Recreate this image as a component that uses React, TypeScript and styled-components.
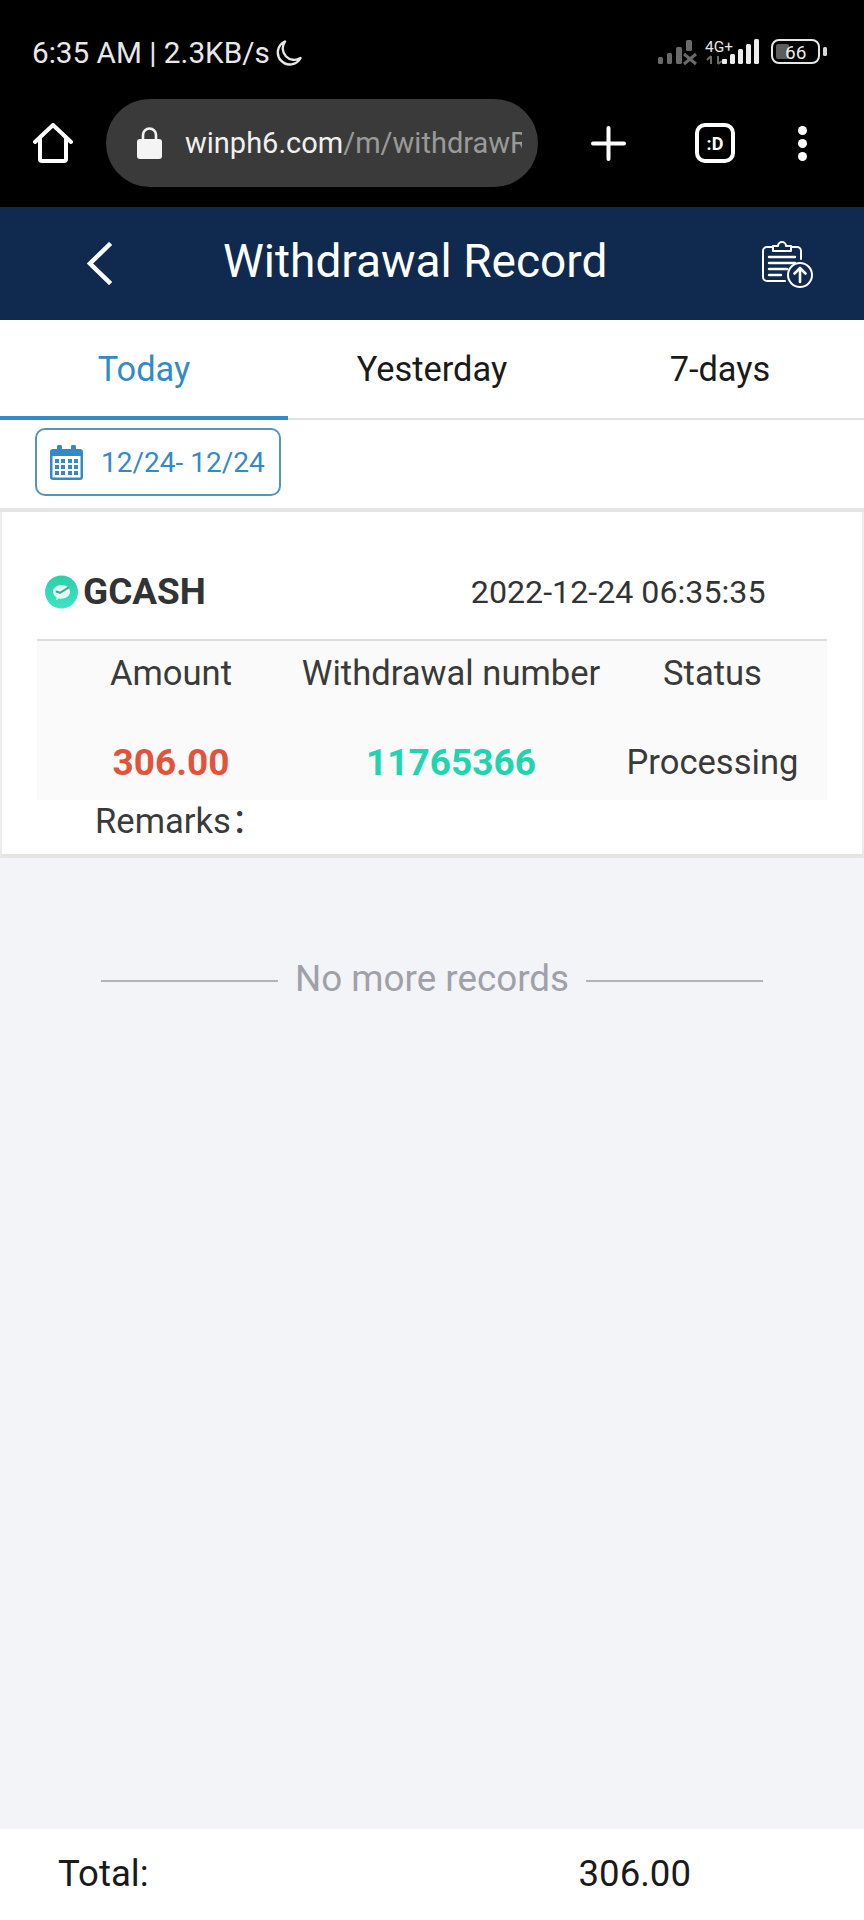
import styled, { createGlobalStyle } from "styled-components";

const GlobalStyle = createGlobalStyle`
    html, body {
        margin: 0;
        padding: 0;
        background: #f3f4f8;
    }
    * {
        box-sizing: border-box;
    }
`;

const Page = styled.div`
    display: flex;
    flex-direction: column;
    width: 864px;
    height: 1920px;
    overflow: hidden;
    font-family: Roboto, "Liberation Sans", sans-serif;
    background: #f3f4f8;
`;

const PhoneChrome = styled.div`
    height: 207px;
    flex-shrink: 0;
    background: #000;
    color: #fff;
`;

const StatusBar = styled.div`
    display: flex;
    align-items: flex-start;
    justify-content: space-between;
    height: 99px;
    padding: 35px 34px 0 32px;
`;

const StatusLeft = styled.div`
    display: flex;
    align-items: center;
    gap: 4px;
    color: #e8e8e8;
    font-size: 29.7px;
    line-height: 36px;
`;

const StatusIcons = styled.svg`
    display: block;
    margin-top: 3px;
    overflow: visible;
`;

const BrowserBar = styled.div`
    display: flex;
    align-items: center;
    height: 88px;
    padding-left: 33px;
`;

const HomeIcon = styled.svg`
    flex-shrink: 0;
    margin-right: 33px;
`;

const UrlPill = styled.div`
    display: flex;
    align-items: center;
    width: 432px;
    height: 88px;
    padding-left: 31px;
    flex-shrink: 0;
    border-radius: 44px;
    background: #3a3a3a;
`;

const LockIcon = styled.svg`
    flex-shrink: 0;
    margin-right: 23px;
`;

const UrlText = styled.div`
    width: 337px;
    line-height: 40px;
    overflow: hidden;
    white-space: nowrap;
    font-size: 29px;
    color: #9a9a9a;
    span {
        color: #f0f0f0;
    }
`;

const PlusIcon = styled.svg`
    flex-shrink: 0;
    margin-left: 53px;
`;

const TabCount = styled.div`
    display: flex;
    align-items: center;
    justify-content: center;
    width: 40px;
    height: 40px;
    margin-left: 69px;
    border: 4px solid #fff;
    border-radius: 10px;
    font-size: 18px;
    font-weight: 700;
`;

const MenuDots = styled.div`
    display: flex;
    flex-direction: column;
    gap: 4px;
    margin-left: 63px;
    i {
        display: block;
        width: 9px;
        height: 9px;
        border-radius: 50%;
        background: #fff;
    }
`;

const Header = styled.header`
    display: flex;
    align-items: center;
    height: 113px;
    flex-shrink: 0;
    padding: 0 50px 0 87px;
    background: #0f2a4e;
    color: #fff;
`;

const BackIcon = styled.svg`
    flex-shrink: 0;
`;

const Title = styled.h1`
    margin: 0 0 6px 111px;
    font-size: 46px;
    font-weight: 400;
    line-height: 1;
    white-space: nowrap;
`;

const RecordIcon = styled.svg`
    flex-shrink: 0;
    margin-left: auto;
`;

const Tabs = styled.nav`
    display: grid;
    grid-template-columns: repeat(3, 288px);
    height: 100px;
    flex-shrink: 0;
    background: #fff;
    border-bottom: 2px solid #e2e2e2;
`;

const Tab = styled.div<{ $active?: boolean }>`
    display: flex;
    align-items: center;
    justify-content: center;
    height: 100px;
    padding-top: 2px;
    padding-bottom: ${(p) => (p.$active ? "0" : "4px")};
    font-size: 34.4px;
    color: ${(p) => (p.$active ? "#348ac7" : "#1a1a1a")};
    border-bottom: ${(p) => (p.$active ? "4px solid #348ac7" : "none")};
`;

const FilterRow = styled.div`
    display: flex;
    height: 92px;
    flex-shrink: 0;
    padding: 8px 0 0 35px;
    background: #fff;
    border-bottom: 4px solid #e5e5e5;
`;

const DateButton = styled.div`
    display: flex;
    align-items: center;
    width: 246px;
    height: 68px;
    padding-left: 13px;
    border: 2px solid #5596b8;
    border-radius: 10px;
    color: #348ac7;
    font-size: 28px;
`;

const CalendarIcon = styled.svg`
    flex-shrink: 0;
    margin-right: 18px;
`;

const Card = styled.section`
    height: 346px;
    flex-shrink: 0;
    padding: 0 35px;
    background: #fff;
    border: 2px solid #ececec;
    border-top: none;
    border-bottom: 4px solid #e5e5e5;
`;

const CardHead = styled.div`
    display: flex;
    align-items: center;
    height: 129px;
    padding: 32px 0 0 8px;
    border-bottom: 2px solid #dcdcdc;
`;

const Logo = styled.svg`
    flex-shrink: 0;
    margin-right: 5px;
`;

const Channel = styled.div`
    font-size: 36.9px;
    font-weight: 700;
    color: #333;
`;

const Stamp = styled.div`
    margin-left: 265px;
    font-size: 32.2px;
    color: #333;
    white-space: nowrap;
`;

const Table = styled.div`
    display: grid;
    grid-template-columns: 268px 292px 231px;
    grid-auto-rows: 80px;
    height: 159px;
    background: #fafafa;
`;

const Cell = styled.div<{ $color?: string; $bold?: boolean }>`
    display: flex;
    align-items: center;
    justify-content: center;
    padding-bottom: 16px;
    white-space: nowrap;
    color: ${(p) => p.$color ?? "#3a3a3a"};
    font-weight: ${(p) => (p.$bold ? 700 : 400)};
    font-size: ${(p) => (p.$bold ? "37px" : "34.6px")};
`;

const ValueCell = styled(Cell)`
    padding-bottom: 0;
    padding-top: 2px;
`;

const Remarks = styled.div`
    padding-left: 58px;
    font-size: 34.6px;
    line-height: 36px;
    color: #3a3a3a;
`;

const Colon = styled.span`
    font-family: "Noto Sans CJK SC", sans-serif;
`;

const Records = styled.div`
    flex: 1;
    padding-top: 99px;
`;

const NoMore = styled.div`
    display: flex;
    align-items: center;
    justify-content: center;
    gap: 17px;
    font-size: 36.8px;
    line-height: 44px;
    color: #a0a0a8;
    &::before,
    &::after {
        content: "";
        width: 177px;
        height: 2px;
        margin-top: 4px;
        background: #b4b4b8;
    }
`;

const Footer = styled.footer`
    display: flex;
    align-items: center;
    height: 91px;
    flex-shrink: 0;
    padding: 0 0 3px 58px;
    background: #fff;
    font-size: 36.6px;
    color: #1a1a1a;
`;

const TotalValue = styled.span`
    margin-left: 430px;
`;

const muted = "#6a6a6a";

function NetworkIcons() {
    return (
        <StatusIcons width="172" height="30" viewBox="0 0 172 30">
            <g fill={muted}>
                <rect x="0" y="19" width="5" height="7" rx="1.5" />
                <rect x="9" y="15" width="5" height="11" rx="1.5" />
                <rect x="18" y="9" width="6" height="17" rx="1.5" />
                <rect x="28" y="2" width="6" height="11" rx="1.5" />
            </g>
            <path d="M26 16l12 10M38 16L26 26" stroke={muted} strokeWidth="3" fill="none" />
            <text x="47" y="14" fontSize="15.5" fill="#e6e6e6" fontFamily="Roboto, sans-serif">4G+</text>
            <path d="M53 18v8M49 22l4-4M60 18v8M64 23l-4 3" stroke={muted} strokeWidth="2" fill="none" />
            <g fill="#ededed">
                <rect x="64" y="21" width="5" height="5" rx="1" />
                <rect x="72" y="16" width="5" height="10" rx="1.5" />
                <rect x="80" y="11" width="5" height="15" rx="1.5" />
                <rect x="88" y="6" width="5" height="20" rx="1.5" />
                <rect x="96" y="1" width="5" height="25" rx="1.5" />
            </g>
            <rect x="114" y="2" width="47" height="23" rx="7" fill="none" stroke="#e6e6e6" strokeWidth="2" />
            <rect x="118" y="6" width="13" height="15" rx="2" fill="#5c5c5c" />
            <rect x="165" y="9" width="4" height="9" rx="1.5" fill="#d8d8d8" />
            <text x="127" y="20.5" fontSize="19" fill="#e8e8e8" fontFamily="Roboto, sans-serif">66</text>
        </StatusIcons>
    );
}

export default function App() {
    return (
        <Page>
            <GlobalStyle />
            <PhoneChrome>
                <StatusBar>
                    <StatusLeft>
                        6:35 AM | 2.3KB/s
                        <svg width="28" height="28" viewBox="0 0 28 28" fill="none" stroke="#e8e8e8" strokeWidth="2.4" strokeLinejoin="round">
                            <path d="M11 2.500A12 12 0 1 0 26.500 19 11.500 11.500 0 0 1 11 2.500z" />
                        </svg>
                    </StatusLeft>
                    <NetworkIcons />
                </StatusBar>
                <BrowserBar>
                    <HomeIcon width="40" height="40" viewBox="0 0 40 40" fill="none" stroke="#fff" strokeWidth="4" strokeLinejoin="round" strokeLinecap="round">
                        <path d="M2 19L20 2l18 17M7 16v20a2 2 0 0 0 2 2h22a2 2 0 0 0 2-2V16" />
                    </HomeIcon>
                    <UrlPill>
                        <LockIcon width="25" height="32" viewBox="0 0 25 32">
                            <path d="M6 13V8a6.500 6.500 0 0 1 13 0v5" fill="none" stroke="#f4f4f4" strokeWidth="2.600" />
                            <rect x="0" y="12" width="25" height="20" rx="3" fill="#f4f4f4" />
                        </LockIcon>
                        <UrlText>
                            <span>winph6.com</span>/m/withdrawRecord
                        </UrlText>
                    </UrlPill>
                    <PlusIcon width="35" height="35" viewBox="0 0 35 35" stroke="#fff" strokeWidth="4" strokeLinecap="round">
                        <path d="M17.500 2v31M2 17.500h31" />
                    </PlusIcon>
                    <TabCount>:D</TabCount>
                    <MenuDots>
                        <i />
                        <i />
                        <i />
                    </MenuDots>
                </BrowserBar>
            </PhoneChrome>
            <Header>
                <BackIcon width="25" height="43" viewBox="0 0 25 43" fill="none" stroke="#fff" strokeWidth="4.500" strokeLinecap="square">
                    <path d="M22 3L3 21.500 22 40" />
                </BackIcon>
                <Title>Withdrawal Record</Title>
                <RecordIcon width="53" height="50" viewBox="0 0 53 50" fill="none" stroke="#fff" strokeWidth="2" strokeLinecap="round" strokeLinejoin="round">
                    <path d="M12 8H6a4 4 0 0 0-4 4v26a4 4 0 0 0 4 4h18M30 8h6a4 4 0 0 1 4 4v8" />
                    <path d="M12 12V7h5a4 4 0 0 1 8 0h5v5z" />
                    <path d="M8 18h26M8 24h26M8 30h18M8 36h12" strokeWidth="2.400" />
                    <circle cx="39" cy="36" r="12" fill="#0f2a4e" />
                    <path d="M39 43V29M33.500 34.500L39 29l5.500 5.500" strokeWidth="2.600" />
                </RecordIcon>
            </Header>
            <Tabs>
                <Tab $active>Today</Tab>
                <Tab>Yesterday</Tab>
                <Tab>7-days</Tab>
            </Tabs>
            <FilterRow>
                <DateButton>
                    <CalendarIcon width="33" height="35" viewBox="0 0 33 35">
                        <path fill="#348ac7" d="M3 4h4V2a2.500 2.500 0 0 1 5 0v2h9V2a2.500 2.500 0 0 1 5 0v2h4a3 3 0 0 1 3 3v25a3 3 0 0 1-3 3H3a3 3 0 0 1-3-3V7a3 3 0 0 1 3-3z" />
                        <rect x="2.500" y="11" width="28" height="21.500" fill="#fff" />
                        <g fill="#348ac7">
                            <rect x="5" y="14" width="4" height="4" />
                            <rect x="11" y="14" width="4" height="4" />
                            <rect x="18" y="14" width="4" height="4" />
                            <rect x="24" y="14" width="4" height="4" />
                            <rect x="5" y="20" width="4" height="4" />
                            <rect x="11" y="20" width="4" height="4" />
                            <rect x="18" y="20" width="4" height="4" />
                            <rect x="24" y="20" width="4" height="4" />
                            <rect x="5" y="26" width="4" height="4" />
                            <rect x="11" y="26" width="4" height="4" />
                            <rect x="18" y="26" width="4" height="4" />
                            <rect x="24" y="26" width="4" height="4" />
                        </g>
                    </CalendarIcon>
                    12/24- 12/24
                </DateButton>
            </FilterRow>
            <Card>
                <CardHead>
                    <Logo width="33" height="34" viewBox="0 0 33 34">
                        <defs>
                            <linearGradient id="gcashFill" x1="0" y1="0" x2="0" y2="1">
                                <stop offset="0" stopColor="#2dcfa6" />
                                <stop offset="1" stopColor="#3fe3c6" />
                            </linearGradient>
                        </defs>
                        <circle cx="16.500" cy="17" r="16.500" fill="url(#gcashFill)" />
                        <path d="M16.500 10c-4.700 0-8.500 3-8.500 6.800 0 2.300 1.400 4.300 3.600 5.500l-.5 2.700 3-1.600c.8.200 1.600.3 2.400.3 4.700 0 8.500-3 8.500-6.900S21.200 10 16.500 10z" fill="#e4fbf5" />
                        <path d="M11.500 16.500l3.500 1.300 8-5" stroke="#45a898" strokeWidth="2" fill="none" strokeLinecap="round" />
                    </Logo>
                    <Channel>GCASH</Channel>
                    <Stamp>2022-12-24 06:35:35</Stamp>
                </CardHead>
                <Table>
                    <Cell>Amount</Cell>
                    <Cell>Withdrawal number</Cell>
                    <Cell>Status</Cell>
                    <ValueCell $bold $color="#e2533c">306.00</ValueCell>
                    <ValueCell $bold $color="#1fd4ae">11765366</ValueCell>
                    <ValueCell>Processing</ValueCell>
                </Table>
                <Remarks>
                    Remarks<Colon>：</Colon>
                </Remarks>
            </Card>
            <Records>
                <NoMore>No more records</NoMore>
            </Records>
            <Footer>
                Total:
                <TotalValue>306.00</TotalValue>
            </Footer>
        </Page>
    );
}
